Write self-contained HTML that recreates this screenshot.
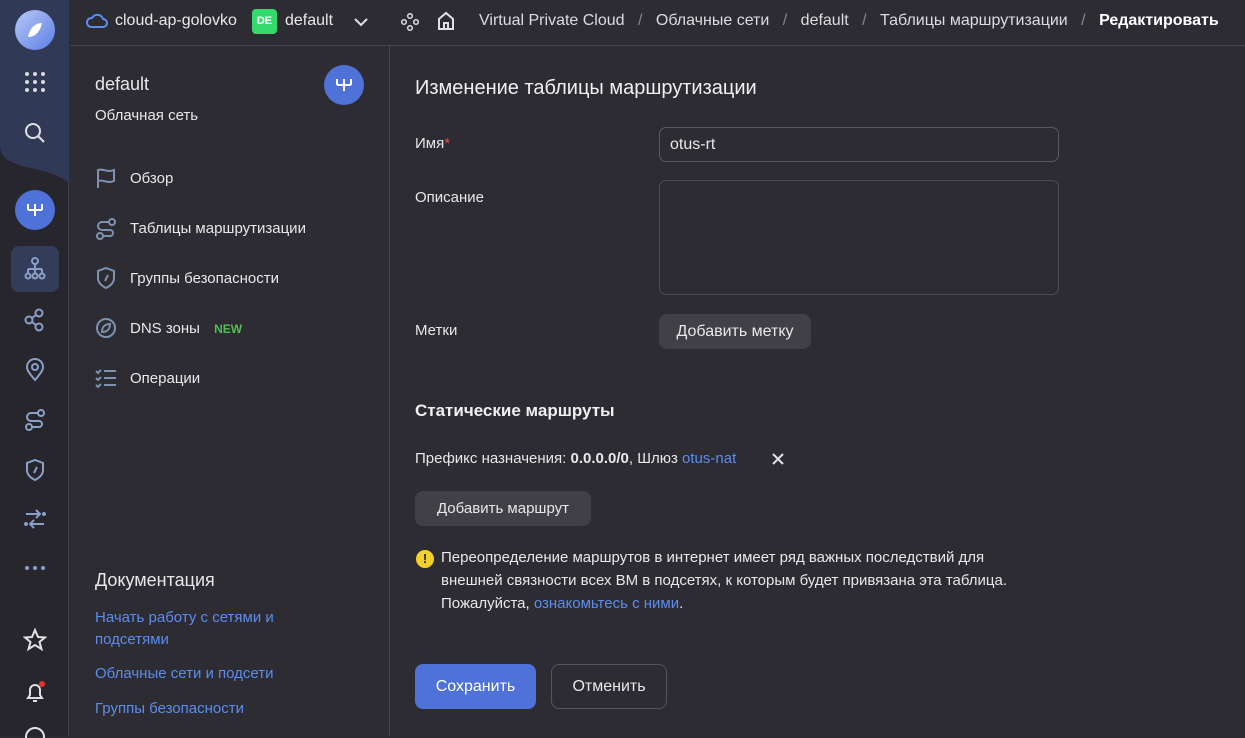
<!DOCTYPE html>
<html><head><meta charset="utf-8"><style>
*{box-sizing:border-box;margin:0;padding:0}
body{width:1245px;height:736px;overflow:hidden;background:#2d2c33;font-family:"Liberation Sans",sans-serif;color:#e8e8ea;position:relative;font-size:15px}
.rail{position:absolute;left:0;top:0;width:69px;height:736px;background:#27262c;border-right:1px solid #3d3c43}
.ab{position:absolute}
.hdr{position:absolute;left:70px;top:0;width:1175px;height:46px;border-bottom:1px solid #45444b}
.side{position:absolute;left:70px;top:46px;width:320px;height:690px;border-right:1px solid #45444b}
.t{position:absolute;white-space:nowrap}
.link{color:#5c8cf0}
.btn{position:absolute;background:#414047;border-radius:8px;color:#e8e8ea;font-size:15px;display:flex;align-items:center;justify-content:center}
svg{position:absolute}
</style></head><body>
<div class="rail">
 <svg width="69" height="185" style="left:0;top:0"><path d="M0 0H69V183C50 168 25 170 8 160C2 156 0 150 0 145Z" fill="#303a56"/></svg>
 <div class="ab" style="left:15px;top:10px;width:40px;height:40px;border-radius:50%;background:linear-gradient(135deg,#b9c8f5,#5a7ee6)"></div>
 <svg style="left:22px;top:17px" width="26" height="26"><path d="M6 20C8 10 14 6 20 6C18 16 12 20 6 20Z" fill="#fff"/></svg>
 <svg style="left:24px;top:71px" width="22" height="22" fill="#d8d8dc"><circle cx="3" cy="3" r="2"/><circle cx="11" cy="3" r="2"/><circle cx="19" cy="3" r="2"/><circle cx="3" cy="11" r="2"/><circle cx="11" cy="11" r="2"/><circle cx="19" cy="11" r="2"/><circle cx="3" cy="19" r="2"/><circle cx="11" cy="19" r="2"/><circle cx="19" cy="19" r="2"/></svg>
 <svg style="left:24px;top:122px" width="22" height="22" fill="none" stroke="#e0e0e4" stroke-width="2"><circle cx="9" cy="9" r="7"/><path d="M14 14L20 20"/></svg>
 <div class="ab" style="left:15px;top:190px;width:40px;height:40px;border-radius:50%;background:#4f72d8"></div>
 <svg style="left:25px;top:200px" width="20" height="20" fill="none" stroke="#fff" stroke-width="2"><path d="M3 4v6M10 4v12M17 4v6M3 10h14"/></svg>
 <div class="ab" style="left:11px;top:246px;width:48px;height:46px;border-radius:8px;background:#333d5a"></div>
 <svg style="left:23px;top:257px" width="24" height="24" fill="none" stroke="#8aa0c8" stroke-width="2"><circle cx="12" cy="4" r="3"/><path d="M12 7v5M5 12h14M5 12v4M19 12v4M12 12v4"/><circle cx="5" cy="19" r="2.5"/><circle cx="12" cy="19" r="2.5"/><circle cx="19" cy="19" r="2.5"/></svg>
 <svg style="left:24px;top:308px" width="22" height="24" fill="none" stroke="#8aa0c8" stroke-width="2"><circle cx="5" cy="12" r="3.5"/><circle cx="15" cy="5" r="3.5"/><circle cx="15" cy="19" r="3.5"/><path d="M8 10l4-3M8 14l4 3"/></svg>
 <svg style="left:24px;top:358px" width="22" height="24" fill="none" stroke="#8aa0c8" stroke-width="2"><path d="M11 22C5 15 3 12 3 9a8 8 0 0116 0c0 3-2 6-8 13z"/><circle cx="11" cy="9" r="3"/></svg>
 <svg style="left:24px;top:408px" width="22" height="24" fill="none" stroke="#8aa0c8" stroke-width="2"><circle cx="17" cy="5" r="3"/><circle cx="5" cy="19" r="3"/><path d="M14 5H7a4 4 0 000 8h8a3 3 0 010 6H8"/></svg>
 <svg style="left:24px;top:458px" width="22" height="24" fill="none" stroke="#8aa0c8" stroke-width="2"><path d="M11 2l8 3v7c0 5-4 8-8 10-4-2-8-5-8-10V5z"/><path d="M13 9l-3 6"/></svg>
 <svg style="left:24px;top:508px" width="22" height="22" fill="none" stroke="#8aa0c8" stroke-width="2"><path d="M2 6h14M12 2l4 4-4 4M20 16H6M10 12l-4 4 4 4"/><circle cx="20" cy="6" r="1" fill="#8aa0c8"/><circle cx="2" cy="16" r="1" fill="#8aa0c8"/></svg>
 <svg style="left:24px;top:564px" width="22" height="8" fill="#8aa0c8"><circle cx="3" cy="4" r="2"/><circle cx="11" cy="4" r="2"/><circle cx="19" cy="4" r="2"/></svg>
 <svg style="left:23px;top:628px" width="24" height="24" fill="none" stroke="#e0e0e4" stroke-width="2"><path d="M12 2l3 7 7 .5-5.5 4.5 2 7-6.5-4-6.5 4 2-7L2 9.5 9 9z"/></svg>
 <svg style="left:24px;top:680px" width="24" height="24" fill="none" stroke="#e0e0e4" stroke-width="2"><path d="M4 18h14l-2-3V10a5 5 0 00-10 0v5zM9 21h4"/><circle cx="18" cy="4" r="3" fill="#e83030" stroke="none"/></svg>
 <svg style="left:24px;top:726px" width="22" height="12" fill="none" stroke="#e0e0e4" stroke-width="2"><circle cx="11" cy="11" r="9"/></svg>
</div>
<div class="hdr">
 <svg style="left:16px;top:13px" width="22" height="16" fill="none" stroke="#5c8cf0" stroke-width="2"><path d="M5 14h12a4 4 0 000-8 6 6 0 00-11-1A4.5 4.5 0 005 14z"/></svg>
 <div class="t" style="left:45px;top:12px;font-size:16px">cloud-ap-golovko</div>
 <div class="ab" style="left:182px;top:9px;width:25px;height:25px;border-radius:4px;background:#33d96a;color:#fff;font-size:11px;font-weight:bold;text-align:center;line-height:25px">DE</div>
 <div class="t" style="left:215px;top:12px;font-size:16px">default</div>
 <svg style="left:283px;top:16px" width="16" height="12" fill="none" stroke="#e0e0e4" stroke-width="2"><path d="M2 3l6 6 6-6"/></svg>
 <svg style="left:330px;top:12px" width="20" height="20" fill="none" stroke="#e0e0e4" stroke-width="1.5"><circle cx="10" cy="4" r="2.3"/><circle cx="4" cy="10" r="2.3"/><circle cx="16" cy="10" r="2.3"/><circle cx="10" cy="16" r="2.3"/></svg>
 <svg style="left:366px;top:11px" width="20" height="20" fill="none" stroke="#e0e0e4" stroke-width="2"><path d="M3 18V8l7-6 7 6v10zM8 18v-6h4v6"/></svg>
 <div class="t" style="left:409px;top:12px;font-size:16px;color:#dcdce0">Virtual Private Cloud <span style="color:#888;padding:0 9px">/</span> Облачные сети <span style="color:#888;padding:0 9px">/</span> default <span style="color:#888;padding:0 9px">/</span> Таблицы маршрутизации <span style="color:#888;padding:0 9px">/</span> <b style="color:#fff">Редактировать</b></div>
</div>
<div class="side">
 <div class="t" style="left:25px;top:28px;font-size:18px">default</div>
 <div class="t" style="left:25px;top:61px;font-size:15px">Облачная сеть</div>
 <div class="ab" style="left:254px;top:19px;width:40px;height:40px;border-radius:50%;background:#4f72d8"></div>
 <svg style="left:264px;top:29px" width="20" height="20" fill="none" stroke="#fff" stroke-width="2"><path d="M3 4v6M10 4v12M17 4v6M3 10h14"/></svg>
 <svg style="left:25px;top:121px" width="22" height="22" fill="none" stroke="#7d92b0" stroke-width="2"><path d="M3 21V3c5-2 9 3 16 0v11c-7 3-11-2-16 0"/></svg>
 <div class="t" style="left:60px;top:124px">Обзор</div>
 <svg style="left:25px;top:171px" width="22" height="24" fill="none" stroke="#7d92b0" stroke-width="2"><circle cx="17" cy="5" r="3"/><circle cx="5" cy="19" r="3"/><path d="M14 5H7a4 4 0 000 8h8a3 3 0 010 6H8"/></svg>
 <div class="t" style="left:60px;top:174px">Таблицы маршрутизации</div>
 <svg style="left:25px;top:220px" width="22" height="24" fill="none" stroke="#7d92b0" stroke-width="2"><path d="M11 2l8 3v7c0 5-4 8-8 10-4-2-8-5-8-10V5z"/><path d="M13 9l-3 6"/></svg>
 <div class="t" style="left:60px;top:224px">Группы безопасности</div>
 <svg style="left:25px;top:271px" width="22" height="22" fill="none" stroke="#7d92b0" stroke-width="2"><circle cx="11" cy="11" r="9"/><path d="M7 15c0-5 3-8 8-8 0 5-3 8-8 8z"/></svg>
 <div class="t" style="left:60px;top:274px">DNS зоны <span style="color:#4fbf4f;font-size:12px;font-weight:bold;margin-left:10px">NEW</span></div>
 <svg style="left:25px;top:321px" width="22" height="22" fill="none" stroke="#7d92b0" stroke-width="2"><path d="M9 4h12M9 11h12M9 18h12M1 4l2 2 3-3M1 11l2 2 3-3M1 18l2 2 3-3"/></svg>
 <div class="t" style="left:60px;top:324px">Операции</div>
 <div class="t" style="left:25px;top:524px;font-size:18px">Документация</div>
 <div class="t link" style="left:25px;top:561px;line-height:22px">Начать работу с сетями и<br>подсетями</div>
 <div class="t link" style="left:25px;top:619px">Облачные сети и подсети</div>
 <div class="t link" style="left:25px;top:654px">Группы безопасности</div>
</div>
<div class="t" style="left:415px;top:77px;font-size:20px;color:#f0f0f2">Изменение таблицы маршрутизации</div>
<div class="t" style="left:415px;top:135px">Имя<span style="color:#e84a4a">*</span></div>
<div class="ab" style="left:659px;top:127px;width:400px;height:35px;border:1px solid #5a5960;border-radius:7px;padding:8px 10px;font-size:16px">otus-rt</div>
<div class="t" style="left:415px;top:189px">Описание</div>
<div class="ab" style="left:659px;top:180px;width:400px;height:115px;border:1px solid #4d4c53;border-radius:7px"></div>
<div class="t" style="left:415px;top:322px">Метки</div>
<div class="btn" style="left:659px;top:314px;width:152px;height:35px;font-size:16px">Добавить метку</div>
<div class="t" style="left:415px;top:401px;font-size:17px;font-weight:bold;color:#f0f0f2">Статические маршруты</div>
<div class="t" style="left:415px;top:450px">Префикс назначения: <b>0.0.0.0/0</b>, Шлюз <span class="link">otus-nat</span></div>
<svg style="left:771px;top:452px" width="14" height="14" fill="none" stroke="#e0e0e4" stroke-width="2"><path d="M2 2l10 10M12 2L2 12"/></svg>
<div class="btn" style="left:415px;top:491px;width:176px;height:35px">Добавить маршрут</div>
<div class="ab" style="left:416px;top:550px;width:18px;height:18px;border-radius:50%;background:#f5d02a;color:#222;font-weight:bold;font-size:13px;text-align:center;line-height:18px">!</div>
<div class="t" style="left:441px;top:546px;line-height:23px">Переопределение маршрутов в интернет имеет ряд важных последствий для<br>внешней связности всех ВМ в подсетях, к которым будет привязана эта таблица.<br>Пожалуйста, <span class="link">ознакомьтесь с ними</span>.</div>
<div class="btn" style="left:415px;top:664px;width:121px;height:45px;background:#4f72d8;color:#fff;font-size:16px">Сохранить</div>
<div class="btn" style="left:551px;top:664px;width:116px;height:45px;background:transparent;border:1px solid #55545b;font-size:16px">Отменить</div>
</body></html>
